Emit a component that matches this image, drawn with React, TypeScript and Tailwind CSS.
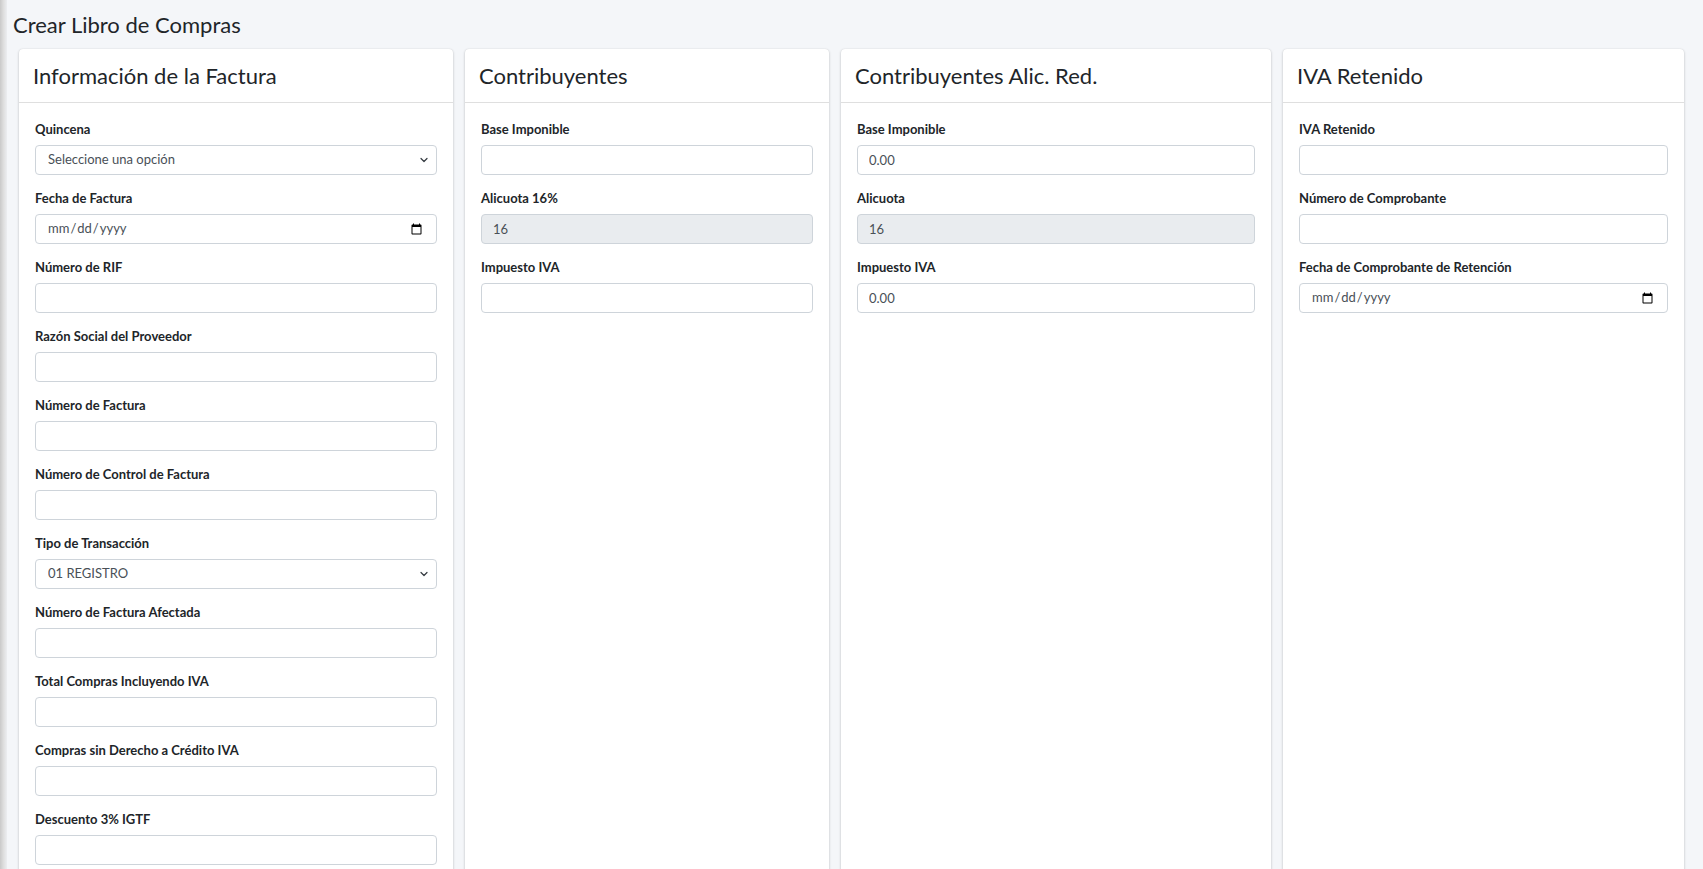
import React from "react";

function Label({ children }: { children: React.ReactNode }) {
  return (
    <label className="block text-[13px] leading-[20px] font-bold text-[#212529] mb-[6px]">
      {children}
    </label>
  );
}

function TextField({ label, value, disabled }: { label: string; value?: string; disabled?: boolean }) {
  return (
    <div className="mb-[13px]">
      <Label>{label}</Label>
      <input
        type="text"
        defaultValue={value}
        disabled={disabled}
        className="block w-full h-[30px] rounded-[4px] border border-[#ced4da] px-[11px] text-[13px] text-[#495057] bg-white disabled:bg-[#e9ecef] outline-none"
      />
    </div>
  );
}

function DateField({ label }: { label: string }) {
  return (
    <div className="mb-[13px]">
      <Label>{label}</Label>
      <input
        type="date"
        className="block w-full h-[30px] rounded-[4px] border border-[#ced4da] pl-[11px] pr-[11px] text-[13px] text-[#495057] bg-white outline-none"
      />
    </div>
  );
}

function SelectField({ label, value }: { label: string; value: string }) {
  return (
    <div className="mb-[13px]">
      <Label>{label}</Label>
      <div className="relative">
        <select
          defaultValue={value}
          className="block w-full h-[30px] appearance-none rounded-[4px] border border-[#ced4da] pl-[12px] pr-8 text-[13px] text-[#495057] bg-white outline-none"
        >
          <option>{value}</option>
        </select>
        <svg
          className="pointer-events-none absolute right-[8px] top-[11px]"
          width="10"
          height="8"
          viewBox="0 0 16 16"
        >
          <path d="M2 5l6 6 6-6" fill="none" stroke="#343a40" strokeWidth="2.4" strokeLinecap="round" strokeLinejoin="round" />
        </svg>
      </div>
    </div>
  );
}

function Card({ title, width, children }: { title: string; width: string; children: React.ReactNode }) {
  return (
    <div
      className={`${width} shrink-0 bg-white rounded-[4px] shadow-[0_0_1px_rgba(0,0,0,0.125),0_1px_3px_rgba(0,0,0,0.2)] flex flex-col`}
    >
      <div className="h-[54px] border-b border-[rgba(0,0,0,0.125)] px-[14px] flex items-center">
        <h3 className="text-[22px] leading-[28px] font-normal text-[#212529]">{title}</h3>
      </div>
      <div className="px-4 pt-4 pb-16 flex-1">{children}</div>
    </div>
  );
}

export default function App() {
  return (
    <div className="min-h-screen flex bg-[#f4f6f9] font-[Lato,sans-serif] text-[#212529]">
      <div className="w-[7px] shrink-0 bg-gradient-to-r from-[#c9c9c9] via-[#dedede] to-[#eceef1]" />
      <div className="flex-1">
        <h1 className="ml-[6px] mt-[10px] mb-[10px] text-[22px] leading-[29px] font-normal text-[#212529]">
          Crear Libro de Compras
        </h1>
        <div className="flex items-stretch ml-[12px] gap-[12px]">
          <Card title="Información de la Factura" width="w-[434px]">
            <SelectField label="Quincena" value="Seleccione una opción" />
            <DateField label="Fecha de Factura" />
            <TextField label="Número de RIF" />
            <TextField label="Razón Social del Proveedor" />
            <TextField label="Número de Factura" />
            <TextField label="Número de Control de Factura" />
            <SelectField label="Tipo de Transacción" value="01 REGISTRO" />
            <TextField label="Número de Factura Afectada" />
            <TextField label="Total Compras Incluyendo IVA" />
            <TextField label="Compras sin Derecho a Crédito IVA" />
            <TextField label="Descuento 3% IGTF" />
          </Card>
          <Card title="Contribuyentes" width="w-[364px]">
            <TextField label="Base Imponible" />
            <TextField label="Alicuota 16%" value="16" disabled />
            <TextField label="Impuesto IVA" />
          </Card>
          <Card title="Contribuyentes Alic. Red." width="w-[430px]">
            <TextField label="Base Imponible" value="0.00" />
            <TextField label="Alicuota" value="16" disabled />
            <TextField label="Impuesto IVA" value="0.00" />
          </Card>
          <Card title="IVA Retenido" width="w-[401px]">
            <TextField label="IVA Retenido" />
            <TextField label="Número de Comprobante" />
            <DateField label="Fecha de Comprobante de Retención" />
          </Card>
        </div>
      </div>
    </div>
  );
}
